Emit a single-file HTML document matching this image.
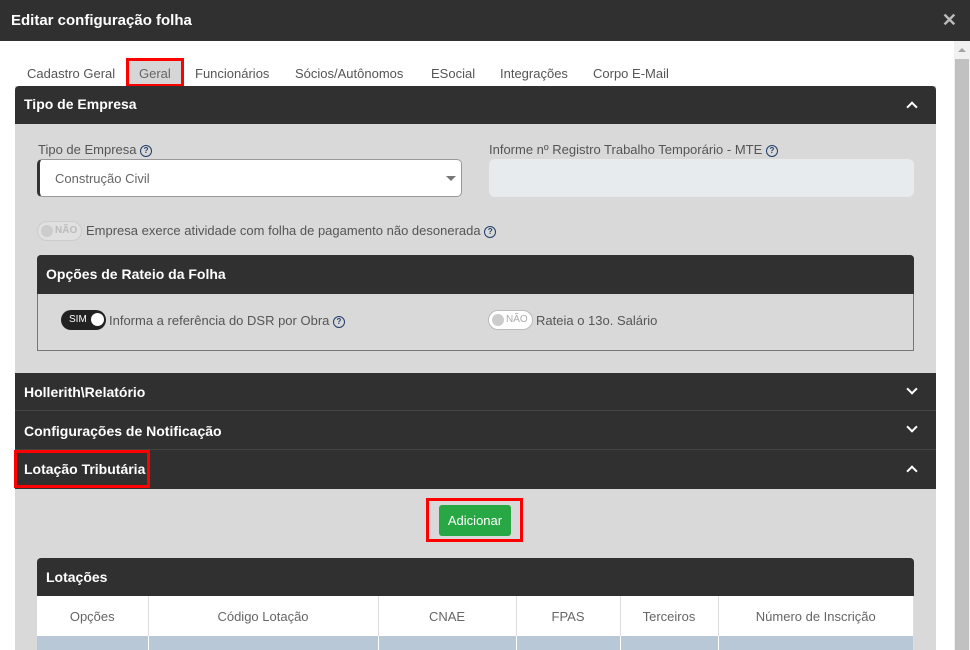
<!DOCTYPE html><html><head><style>
*{box-sizing:border-box;margin:0;padding:0}
html,body{width:970px;height:650px;overflow:hidden}
body{background:#fff;font-family:"Liberation Sans",sans-serif;font-size:13px;color:#555}
#w{position:relative;width:970px;height:650px;overflow:hidden}
.a{position:absolute}
.dark{background:#303030;color:#fff;font-weight:bold;font-size:14px}
.q{display:inline-block;width:12px;height:12px;border:1.5px solid #1f3d6b;border-radius:50%;font-size:8px;line-height:9px;text-align:center;color:#1f3d6b;font-weight:bold;vertical-align:middle}
.chev{position:absolute;right:20px;width:8px;height:8px;border-left:2.5px solid #fff;border-top:2.5px solid #fff}
.up{transform:rotate(45deg);top:17px}
.dn{transform:rotate(-135deg);top:12px}
table{border-collapse:collapse;width:100%}
td{border-right:1px solid #ddd;text-align:center;height:40px;font-size:13px;color:#666}
</style></head><body><div id="w">
<div class="a dark" style="left:0;top:0;width:970px;height:41px;font-size:15px;padding:12px 11px">Editar configuração folha<span class="a" style="right:13px;top:10px;color:#bbb;font-size:18px">✕</span></div>
<div class="a" style="left:954px;top:41px;width:16px;height:609px;background:#f1f1f1"><div class="a" style="left:1px;top:18px;width:14px;height:591px;background:#c1c1c1"></div><div class="a" style="left:4px;top:7px;border:4px solid transparent;border-bottom:4px solid #a3a3a3;border-top:0"></div></div>
<div class="a" style="left:27px;top:66px;font-size:13px;color:#555;white-space:nowrap">Cadastro Geral</div>
<div class="a" style="left:126px;top:58px;width:58px;height:29px;border:3px solid #f00;background:#d6d6d6;font-size:13px;color:#666;padding:5px 0 0 10px">Geral</div>
<div class="a" style="left:195px;top:66px;white-space:nowrap">Funcionários</div>
<div class="a" style="left:295px;top:66px;white-space:nowrap">Sócios/Autônomos</div>
<div class="a" style="left:431px;top:66px">ESocial</div>
<div class="a" style="left:500px;top:66px">Integrações</div>
<div class="a" style="left:593px;top:66px">Corpo E-Mail</div>
<div class="a" style="left:15px;top:86px;width:921px;height:564px;background:#d9d9d9"></div>
<div class="a dark" style="left:15px;top:86px;width:921px;height:38px;padding:10px 9px;border-radius:4px 4px 0 0">Tipo de Empresa<span class="chev up"></span></div>
<div class="a" style="left:38px;top:142px">Tipo de Empresa <span class="q">?</span></div>
<div class="a" style="left:37px;top:159px;width:425px;height:38px;background:#fff;border:1px solid #999;border-left:3px solid #333;border-radius:5px;padding:11px 15px;font-size:13px;color:#666">Construção Civil<span class="a" style="right:5px;top:16px;border:5px solid transparent;border-top:5px solid #777"></span></div>
<div class="a" style="left:489px;top:142px">Informe nº Registro Trabalho Temporário - MTE <span class="q">?</span></div>
<div class="a" style="left:489px;top:159px;width:425px;height:38px;background:#e8ebee;border-radius:6px"></div>
<div class="a" style="left:37px;top:221px;width:45px;height:20px;border:1px solid #ccc;border-radius:10px;background:#e0e0e0;font-size:10px;line-height:18px;color:#bbb;padding-left:17px;font-weight:bold">NÃO<span class="a" style="left:3px;top:3px;width:12px;height:12px;border-radius:50%;background:#ccc"></span></div>
<div class="a" style="left:86px;top:223px">Empresa exerce atividade com folha de pagamento não desonerada <span class="q">?</span></div>
<div class="a" style="left:37px;top:255px;width:877px;height:96px;border:1px solid #777;border-radius:4px 4px 0 0"></div>
<div class="a dark" style="left:37px;top:255px;width:877px;height:39px;padding:11px 9px;border-radius:4px 4px 0 0">Opções de Rateio da Folha</div>
<div class="a" style="left:61px;top:310px;width:45px;height:20px;border-radius:10px;background:#222;color:#fff;font-size:10px;line-height:20px;padding-left:8px">SIM<span class="a" style="right:2px;top:3px;width:13px;height:13px;border-radius:50%;background:#fff"></span></div>
<div class="a" style="left:109px;top:313px">Informa a referência do DSR por Obra <span class="q">?</span></div>
<div class="a" style="left:488px;top:310px;width:45px;height:20px;border:1px solid #bbb;border-radius:10px;background:#fff;font-size:10px;line-height:18px;color:#aaa;padding-left:17px">NÃO<span class="a" style="left:3px;top:3px;width:12px;height:12px;border-radius:50%;background:#ccc"></span></div>
<div class="a" style="left:536px;top:313px">Rateia o 13o. Salário</div>
<div class="a dark" style="left:15px;top:373px;width:921px;height:38px;padding:11px 9px;border-bottom:1px solid #444">Hollerith\Relatório<span class="chev dn"></span></div>
<div class="a dark" style="left:15px;top:411px;width:921px;height:39px;padding:12px 9px;border-bottom:1px solid #444">Configurações de Notificação<span class="chev dn"></span></div>
<div class="a dark" style="left:15px;top:450px;width:921px;height:39px;padding:11px 9px">Lotação Tributária<span class="chev up"></span></div>
<div class="a" style="left:14px;top:450px;width:136px;height:38px;border:3px solid #f00"></div>
<div class="a" style="left:426px;top:498px;width:97px;height:44px;border:3px solid #f00"></div>
<div class="a" style="left:439px;top:505px;width:72px;height:31px;background:#28a745;border-radius:3px;color:#fff;font-size:13px;text-align:center;line-height:31px">Adicionar</div>
<div class="a dark" style="left:37px;top:558px;width:877px;height:38px;padding:11px 9px;border-radius:4px 4px 0 0">Lotações</div>
<div class="a" style="left:37px;top:596px;width:877px;height:54px;overflow:hidden;background:#fff"><table><tr><td style="width:111px">Opções</td><td style="width:230px">Código Lotação</td><td style="width:138px">CNAE</td><td style="width:104px">FPAS</td><td style="width:98px">Terceiros</td><td>Número de Inscrição</td></tr><tr style="background:#b9c8d6"><td style="border-color:#fff">&nbsp;</td><td style="border-color:#fff"></td><td style="border-color:#fff"></td><td style="border-color:#fff"></td><td style="border-color:#fff"></td><td></td></tr></table></div>
</div></body></html>
